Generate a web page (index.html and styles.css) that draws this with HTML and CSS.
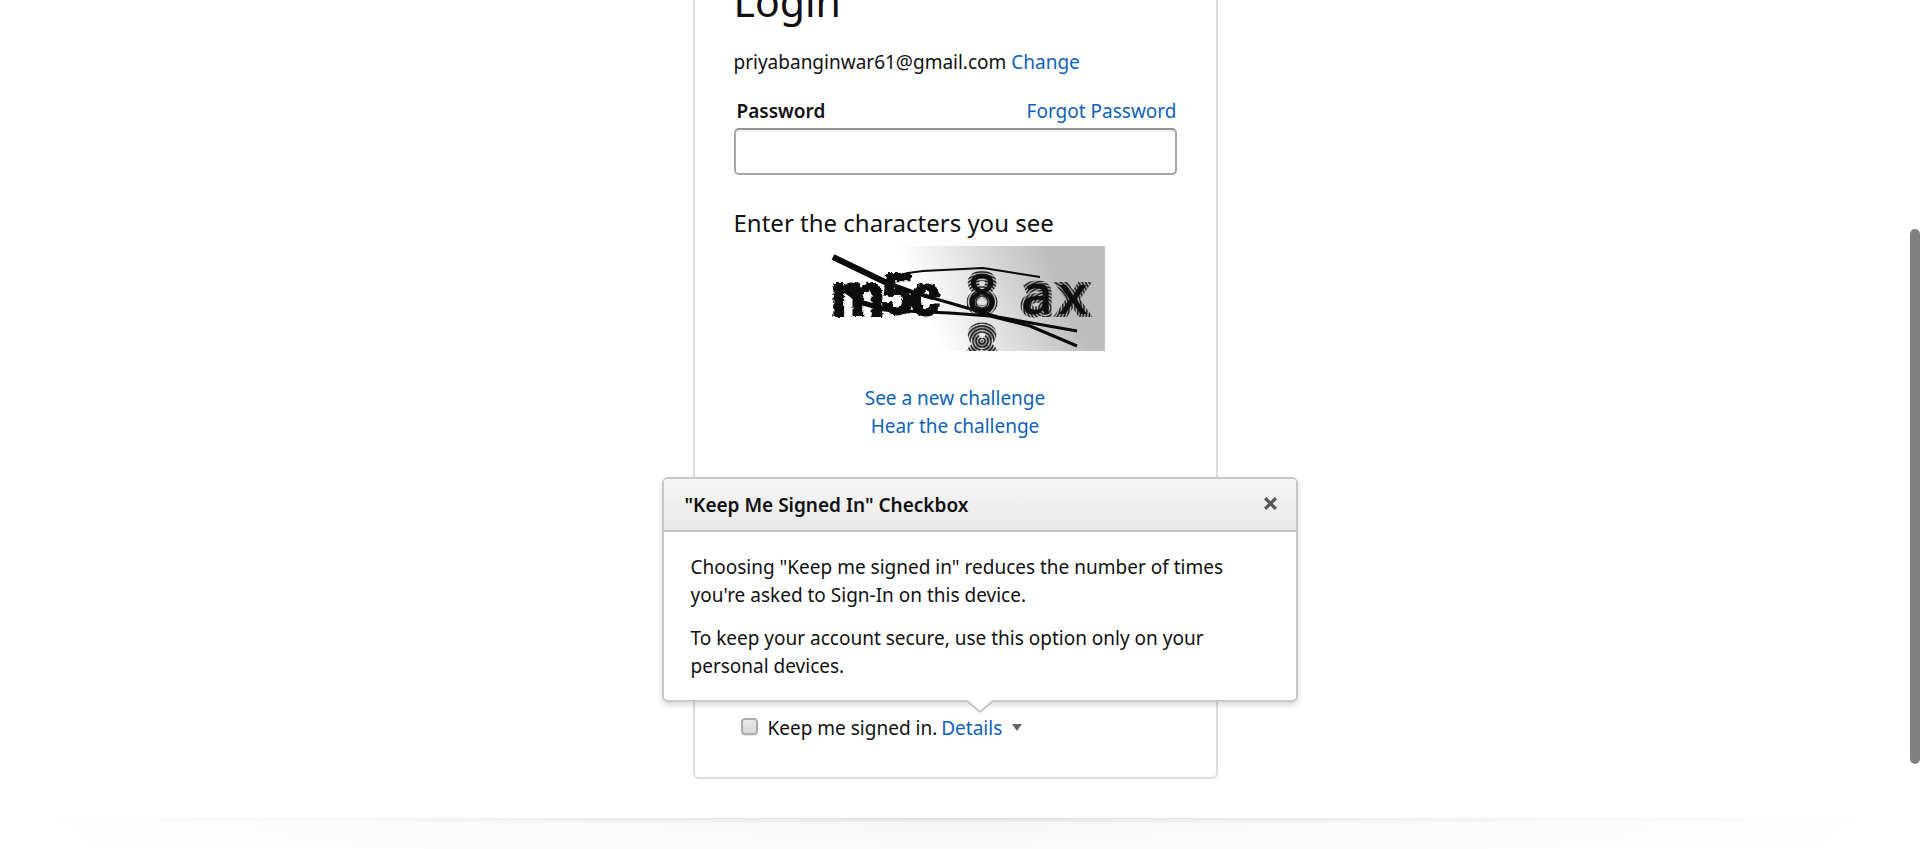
FILE: index.html
```html
<!DOCTYPE html>
<html lang="en">
<head>
<meta charset="utf-8">
<title>Login</title>
<link rel="stylesheet" href="styles.css">
</head>
<body>
<main class="page">
  <form class="card">
    <h1 class="title">Login</h1>
    <p class="account">priyabanginwar61@gmail.com <a href="#">Change</a></p>
    <div class="field-head">
      <label class="field-label" for="password">Password</label>
      <a href="#">Forgot Password</a>
    </div>
    <input class="password" id="password" type="password">
    <h2 class="captcha-title">Enter the characters you see</h2>
    <svg class="captcha" viewBox="0 0 300 105" role="img" aria-label="Captcha">
      <defs>
        <linearGradient id="shade" gradientUnits="userSpaceOnUse" x1="124" y1="76" x2="248" y2="24">
          <stop offset="0" stop-color="#fff"/>
          <stop offset=".5" stop-color="#dedede"/>
          <stop offset="1" stop-color="#bebebe"/>
        </linearGradient>
        <filter id="rough" x="-10%" y="-10%" width="120%" height="120%">
          <feTurbulence type="fractalNoise" baseFrequency=".25" numOctaves="2" seed="4"/>
          <feDisplacementMap in="SourceGraphic" scale="5" xChannelSelector="R" yChannelSelector="G"/>
        </filter>
        <radialGradient id="ripple" gradientUnits="userSpaceOnUse" cx="177" cy="56" r="3" spreadMethod="repeat">
          <stop offset="0" stop-color="#111"/>
          <stop offset=".5" stop-color="#111" stop-opacity=".1"/>
          <stop offset="1" stop-color="#111"/>
        </radialGradient>
        <radialGradient id="ripple-low" gradientUnits="userSpaceOnUse" cx="177" cy="95" r="3" spreadMethod="repeat">
          <stop offset="0" stop-color="#111"/>
          <stop offset=".5" stop-color="#111" stop-opacity=".1"/>
          <stop offset="1" stop-color="#111"/>
        </radialGradient>
        <radialGradient id="ripple-right" gradientUnits="userSpaceOnUse" cx="240" cy="62" r="3" spreadMethod="repeat">
          <stop offset="0" stop-color="#111"/>
          <stop offset=".5" stop-color="#111" stop-opacity=".1"/>
          <stop offset="1" stop-color="#111"/>
        </radialGradient>
      </defs>
      <rect width="300" height="105" fill="url(#shade)"/>
      <g class="glyphs heavy" filter="url(#rough)">
        <text x="26" y="70" font-size="62">m</text>
        <text x="76" y="68" font-size="56">5</text>
        <text x="105" y="69" font-size="58">c</text>
      </g>
      <g class="glyphs ripples">
        <text x="177" y="66" font-size="52" text-anchor="middle" stroke="url(#ripple)">8</text>
        <text x="177" y="118" font-size="52" text-anchor="middle" fill-opacity=".3" stroke="url(#ripple-low)">8</text>
        <text x="232" y="68" font-size="56" text-anchor="middle" stroke="url(#ripple-right)">a</text>
        <text x="268" y="68" font-size="54" text-anchor="middle" stroke="url(#ripple-right)">x</text>
      </g>
      <g fill="none" stroke="#0a0a0a" stroke-linejoin="round">
        <path stroke-width="6" d="M28 11 82 37"/>
        <path stroke-width="4" d="M80 36 110 47 128 52"/>
        <path stroke-width="3" d="M124 51 145 57 193 71 272 85"/>
        <path stroke-width="2" d="M84 32 103 27 118 25 178 22 235 31"/>
        <path stroke-width="5" d="M31 38 58 57 80 63 105 65"/>
        <path stroke-width="3" d="M100 65 145 67 185 70 225 80 272 100"/>
      </g>
    </svg>
    <div class="captcha-links">
      <a href="#">See a new challenge</a>
      <a href="#">Hear the challenge</a>
    </div>
    <div class="remember">
      <input class="tick" id="remember" type="checkbox">
      <label for="remember">Keep me signed in.</label>
      <a class="details" href="#">Details <span class="caret"></span></a>
      <section class="popover" role="dialog" aria-labelledby="popover-title">
        <header class="popover-head">
          <h3 class="popover-title" id="popover-title">"Keep Me Signed In" Checkbox</h3>
          <button class="close" type="button" aria-label="Close">
            <svg class="close-icon" viewBox="0 0 14 14"><path d="M2 2 12 12M12 2 2 12"/></svg>
          </button>
        </header>
        <div class="popover-body">
          <p>Choosing "Keep me signed in" reduces the number of times you're asked to Sign-In on this device.</p>
          <p>To keep your account secure, use this option only on your personal devices.</p>
        </div>
        <svg class="arrow" viewBox="0 0 26 14"><path d="M0 0 13 12 26 0Z" fill="#fff"/><path d="M0 1 13 12 26 1" fill="none" stroke="#c4c4c4" stroke-width="2"/></svg>
      </section>
    </div>
  </form>
</main>
<footer class="footer"></footer>
<div class="scroll-thumb"></div>
</body>
</html>
```
FILE: styles.css
```css
* {
  box-sizing: border-box;
}

body {
  display: flex;
  flex-direction: column;
  min-height: 100vh;
  margin: 0;
  padding-right: 10px;
  background: #fff;
  color: #111;
  font: 19px/28px "Noto Sans", "Open Sans", sans-serif;
}

a {
  color: #0b62bd;
  text-decoration: none;
}

h1, h2, h3, p {
  margin: 0;
}

.page {
  display: flex;
  justify-content: center;
}

.card {
  display: flex;
  flex-direction: column;
  width: 100%;
  max-width: 525px;
  padding: 0 39px 35px;
  border: 2px solid #ddd;
  border-top: 0;
  border-radius: 0 0 6px 6px;
}

.title {
  margin-top: -25px;
  font-size: 41px;
  font-weight: 400;
  line-height: 52px;
}

.account {
  margin-top: 21px;
}

.field-head {
  display: flex;
  justify-content: space-between;
  margin-top: 21px;
  padding-left: 3px;
}

.field-label {
  font-weight: 600;
}

.password {
  width: 100%;
  height: 47px;
  margin-top: 3px;
  padding: 4px 10px;
  border: 2px solid #a6a6a6;
  border-top-color: #949494;
  border-radius: 5px;
  box-shadow: inset 0 2px 1px rgba(0, 0, 0, .06);
  font: inherit;
  outline: 0;
}

.captcha-title {
  margin-top: 31px;
  font-size: 24px;
  font-weight: 400;
  line-height: 34px;
}

.captcha {
  align-self: center;
  width: 300px;
  height: 105px;
  margin-top: 6px;
}

.glyphs {
  fill: #0a0a0a;
  font-family: Roboto, "Open Sans", sans-serif;
  font-weight: 700;
}

.heavy {
  stroke: #0a0a0a;
  stroke-width: 2px;
}

.ripples {
  font-family: "Noto Sans", sans-serif;
  font-weight: 500;
  stroke-width: 6px;
}

.captcha-links {
  display: flex;
  flex-direction: column;
  align-items: center;
  margin-top: 33px;
}

.remember {
  position: relative;
  display: flex;
  align-items: center;
  gap: 4px;
  margin-top: 274px;
  padding-left: 7px;
}

.tick {
  appearance: none;
  width: 17px;
  height: 17px;
  margin: 0 6px 3px 0;
  border: 2px solid #acacac;
  border-radius: 4px;
  background: linear-gradient(#e8e8e8, #d8d8d8);
  box-shadow: 0 1px 1px rgba(0, 0, 0, .1);
}

.caret {
  display: inline-block;
  margin: 0 0 4px 5px;
  border: 5px solid transparent;
  border-top: 7px solid #666;
  border-bottom: 0;
}

.popover {
  position: absolute;
  bottom: 40px;
  left: -72px;
  width: 636px;
  border: 2px solid #c8c8c8;
  border-radius: 6px;
  background: #fff;
  box-shadow: 0 3px 6px rgba(0, 0, 0, .16);
}

.popover-head {
  display: flex;
  align-items: center;
  justify-content: space-between;
  height: 53px;
  padding: 0 18px 0 21px;
  border-bottom: 2px solid #c4c4c4;
  border-radius: 4px 4px 0 0;
  background: linear-gradient(#f6f6f6, #e8e8e8);
}

.popover-title {
  font-size: 19px;
  font-weight: 600;
}

.close {
  display: flex;
  padding: 0 0 2px;
  border: 0;
  background: none;
}

.close-icon {
  width: 15px;
  height: 15px;
  fill: none;
  stroke: #555;
  stroke-width: 3;
}

.popover-body {
  display: flex;
  flex-direction: column;
  gap: 15px;
  padding: 21px 60px 20px 27px;
}

.arrow {
  position: absolute;
  top: 100%;
  left: 303px;
  width: 26px;
  height: 14px;
}

.footer {
  flex: 1;
  margin-top: 39px;
  background:
    linear-gradient(to right, #fff 2%, rgba(255, 255, 255, 0) 50%, #fff 98%),
    linear-gradient(rgba(0, 0, 0, .14), rgba(0, 0, 0, .035) 5px, transparent 66px);
}

.scroll-thumb {
  position: fixed;
  top: 27%;
  right: 0;
  width: 10px;
  height: 63%;
  border-radius: 5px;
  background: #808080;
}
```
